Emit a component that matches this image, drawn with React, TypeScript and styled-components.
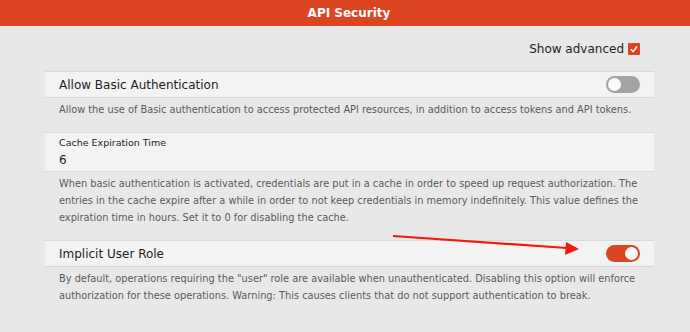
import styled, { createGlobalStyle } from 'styled-components';

const GlobalStyle = createGlobalStyle`
  html, body {
    margin: 0;
    padding: 0;
    background: #e8e8e8;
    font-family: "DejaVu Sans", "Liberation Sans", sans-serif;
  }
`;

interface ToggleProps {
  $on?: boolean;
}

interface SettingProps {
  title: string;
  on: boolean;
  children: React.ReactNode;
}

const Setting = ({ title, on, children }: SettingProps) => (
  <SSection>
    <SRow>
      <STitle>{title}</STitle>
      <SToggle $on={on} />
    </SRow>
    <SDesc>{children}</SDesc>
  </SSection>
);

const App = () => {
  return (
    <>
      <GlobalStyle />
      <SPage>
        <SHeader>API Security</SHeader>
        <SMain>
          <SToolbar>
            Show advanced
            <SCheckbox>
              <svg width="12" height="12" viewBox="0 0 12 12">
                <path d="M3 6.2 L5.2 8.6 L9 3.4" fill="none" stroke="#fff" strokeWidth="1.4" />
              </svg>
            </SCheckbox>
          </SToolbar>

          <Setting title="Allow Basic Authentication" on={false}>
            Allow the use of Basic authentication to access protected API resources, in addition to access tokens and API tokens.
          </Setting>

          <SSection>
            <SField>
              <SFieldLabel>Cache Expiration Time</SFieldLabel>
              <SFieldValue>6</SFieldValue>
            </SField>
            <SDesc>
              When basic authentication is activated, credentials are put in a cache in order to speed up request authorization. The
              <br />
              entries in the cache expire after a while in order to not keep credentials in memory indefinitely. This value defines the
              <br />
              expiration time in hours. Set it to 0 for disabling the cache.
            </SDesc>
          </SSection>

          <Setting title="Implicit User Role" on>
            By default, operations requiring the "user" role are available when unauthenticated. Disabling this option will enforce
            <br />
            authorization for these operations. Warning: This causes clients that do not support authentication to break.
          </Setting>
        </SMain>

        <SArrow width="690" height="332" viewBox="0 0 690 332">
          <line x1="393" y1="236" x2="567" y2="248" stroke="#f01a10" strokeWidth="2.2" />
          <polygon points="579,249 566,242 565,255" fill="#f01a10" />
        </SArrow>
      </SPage>
    </>
  );
};

export default App;

const SPage = styled.div`
  position: relative;
  width: 690px;
  height: 332px;
  overflow: hidden;
  background: #e8e8e8;
`;

const SHeader = styled.header`
  display: flex;
  align-items: center;
  justify-content: center;
  height: 26px;
  padding-left: 8px;
  background: #db4521;
  color: #fff;
  font-size: 12px;
  font-weight: 700;
`;

const SMain = styled.main`
  padding: 0 36px 0 45px;
`;

const SToolbar = styled.div`
  display: flex;
  align-items: center;
  justify-content: flex-end;
  gap: 4px;
  height: 45px;
  padding-right: 14px;
  font-size: 12px;
  color: #1e1e1e;
`;

const SCheckbox = styled.span`
  display: flex;
  width: 12px;
  height: 12px;
  margin-top: 1px;
  background: #db4521;
  border-radius: 1px;
`;

const SSection = styled.section`
  display: flex;
  flex-direction: column;
`;

const SRow = styled.div`
  display: flex;
  align-items: center;
  justify-content: space-between;
  height: 27px;
  box-sizing: border-box;
  padding: 0 14px;
  background: #f3f3f3;
  border-top: 1px solid #d9d9d9;
  border-bottom: 1px solid #d9d9d9;
`;

const STitle = styled.span`
  font-size: 12px;
  color: #1e1e1e;
`;

const SToggle = styled.span<ToggleProps>`
  position: relative;
  width: 34px;
  height: 17px;
  border-radius: 9px;
  background: ${({ $on }) => ($on ? '#db4521' : '#a3a3a3')};

  &::after {
    content: '';
    position: absolute;
    top: 2px;
    left: ${({ $on }) => ($on ? '19px' : '2px')};
    width: 13px;
    height: 13px;
    border-radius: 50%;
    background: #fafafa;
  }
`;

const SField = styled.div`
  display: flex;
  flex-direction: column;
  justify-content: center;
  height: 40px;
  box-sizing: border-box;
  padding: 0 14px;
  background: #f3f3f3;
  border-top: 1px solid #d9d9d9;
  border-bottom: 1px solid #d9d9d9;
  color: #1e1e1e;
`;

const SFieldLabel = styled.span`
  font-size: 9.5px;
  line-height: 16px;
`;

const SFieldValue = styled.span`
  font-size: 12px;
  line-height: 18px;
`;

const SDesc = styled.p`
  margin: 0;
  padding: 3px 0 14px 14px;
  font-size: 9.8px;
  line-height: 17px;
  color: #5a5a5a;
  white-space: nowrap;
`;

const SArrow = styled.svg`
  position: absolute;
  left: 0;
  top: 0;
  pointer-events: none;
`;
